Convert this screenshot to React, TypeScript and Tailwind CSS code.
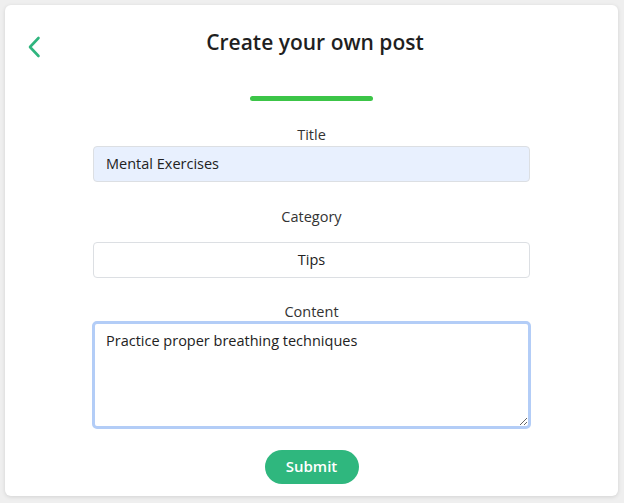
import React, { useState } from 'react';

export default function App() {
  const [title, setTitle] = useState('Mental Exercises');
  const [category, setCategory] = useState('Tips');
  const [content, setContent] = useState('Practice proper breathing techniques');

  return (
    <div className="w-[624px] h-[503px] bg-[#efefef] p-[5px] pr-[6px] pb-[7px] font-['Open_Sans',sans-serif] text-[#212529]">
      <div className="h-full bg-white rounded-[6px] shadow-[0_1px_4px_rgba(0,0,0,0.12)] flex flex-col">
        {/* Header */}
        <div className="flex items-center pt-[31px] px-[22px]">
          <button className="w-[14px] h-[22px] flex items-center justify-center text-[#2fb57e]">
            <svg width="14" height="22" viewBox="0 0 14 22" fill="none">
              <path d="M11.5 2 L3 11 L11.5 20" stroke="currentColor" strokeWidth="2.6" strokeLinecap="round" strokeLinejoin="round" />
            </svg>
          </button>
          <h1 className="flex-1 text-center text-[21px] font-semibold text-[#1f1f1f] pr-[7px] -mt-[9px]">Create your own post</h1>
        </div>

        <div className="flex justify-center mt-[37px]">
          <div className="w-[123px] h-[5px] rounded-full bg-[#3cc548]" />
        </div>

        {/* Form */}
        <form className="w-[437px] mx-auto mt-[24px] flex flex-col items-center text-[14.5px]" onSubmit={(e) => e.preventDefault()}>
          <label className="leading-[20px] text-[#333]">Title</label>
          <input
            value={title}
            onChange={(e) => setTitle(e.target.value)}
            className="w-full h-[36px] mt-[1px] px-[12px] rounded-[4px] border border-[#dcdfe3] bg-[#e8f0fe] text-[#222] outline-none"
          />

          <label className="mt-[25px] leading-[20px] text-[#333]">Category</label>
          <input
            value={category}
            onChange={(e) => setCategory(e.target.value)}
            className="w-full h-[36px] mt-[15px] px-[12px] rounded-[4px] border border-[#dcdfe3] bg-white text-center text-[#222] outline-none"
          />

          <label className="mt-[24px] leading-[20px] text-[#333]">Content</label>
          <textarea
            value={content}
            onChange={(e) => setContent(e.target.value)}
            className="w-[439px] h-[108px] -mt-[1px] px-[11px] py-[6px] rounded-[5px] border-[3px] border-[#b3cdf7] bg-white text-[#222] outline-none resize-y"
          />

          <button
            type="submit"
            className="mt-[21px] w-[94px] h-[34px] rounded-full bg-[#2fb77e] text-white font-semibold text-[15px]"
          >
            Submit
          </button>
        </form>
      </div>
    </div>
  );
}
